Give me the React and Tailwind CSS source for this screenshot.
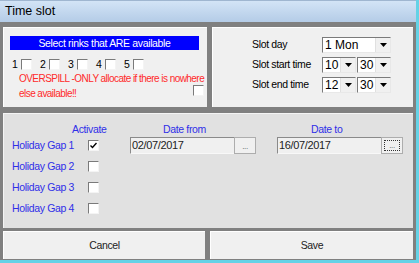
import React from 'react';

const Check = ({ checked = false }) => (
  <div className="w-[11px] h-[11px] bg-white border-t border-l border-[#7a7a7a] border-r border-b border-r-[#f4f4f4] border-b-[#f4f4f4] flex items-center justify-center shrink-0">
    {checked && (
      <svg width="7" height="7" viewBox="0 0 7 7">
        <path d="M0.5 3.5 L2.5 5.5 L6.5 1" fill="none" stroke="#000" strokeWidth="1.4" />
      </svg>
    )}
  </div>
);

const Select = ({ value, width }) => (
  <div
    className="h-[16px] bg-white border-t border-l border-[#7a7a7a] border-r border-b border-r-[#e8e8e8] border-b-[#e8e8e8] flex items-stretch"
    style={{ width }}
  >
    <span className="flex-1 pl-[2px] leading-[14px] text-[12px] tracking-normal text-black">{value}</span>
    <div className="w-[15px] bg-[#f0f0f0] border-l border-[#e0e0e0] flex items-center justify-center">
      <svg width="7" height="4" viewBox="0 0 7 4">
        <path d="M0 0 L7 0 L3.5 4 Z" fill="#000" />
      </svg>
    </div>
  </div>
);

const DateField = ({ value, focused }) => (
  <div className="flex h-[17px]">
    <div className="w-[104px] bg-[#f0f0f0] border-t border-l border-[#8a8a8a] border-b border-b-[#f8f8f8] text-[11px] leading-[15px] text-[#222] pl-[1px]">
      {value}
    </div>
    <div className="w-[22px] bg-[#f0f0f0] border border-[#adadad] flex items-center justify-center">
      <div className={`w-[16px] h-[11px] flex items-end justify-center text-[8px] leading-[8px] text-[#555] ${focused ? 'border border-dotted border-[#333]' : ''}`}>
        ...
      </div>
    </div>
  </div>
);

const App = () => {
  const gaps = ['Holiday Gap 1', 'Holiday Gap 2', 'Holiday Gap 3', 'Holiday Gap 4'];

  return (
    <div
      className="w-[419px] h-[263px] border-r-[3px] border-b-[3px] border-[#64d2e6] flex flex-col overflow-hidden text-[10.5px] tracking-[-0.35px]"
      style={{ fontFamily: '"Liberation Sans", Arial, sans-serif' }}
    >
      {/* title bar */}
      <div className="h-[22px] shrink-0 bg-gradient-to-b from-[#d3e4f6] to-[#b4cce7] border-t border-[#9fb6d0] flex items-center pl-[5px]">
        <span className="text-[12.5px] tracking-normal text-black">Time slot</span>
      </div>

      {/* body */}
      <div className="flex-1 bg-[#808080] pt-[5px] pl-[3px] pr-[3px] flex flex-col">
        <div className="flex h-[80px] gap-[5px]">
          {/* rinks */}
          <div className="w-[204px] bg-[#f0f0f0] border-t border-l border-white pt-[8px] pl-[6px] flex flex-col">
            <div className="w-[189px] h-[14px] bg-[#0000ff] text-white leading-[14px] text-center">
              Select rinks that ARE available
            </div>
            <div className="flex items-center h-[12px] mt-[8px] pl-[2px]">
              {['1', '2', '3', '4', '5'].map((n) => (
                <div key={n} className="flex items-center w-[28px]">
                  <span className="w-[9px] leading-[12px] text-black">{n}</span>
                  <Check />
                </div>
              ))}
            </div>
            <div className="flex mt-[1px]">
              <div className="w-[180px] pl-[9px] text-[10px] tracking-[-0.55px] leading-[15px] text-[#ff2a2a] whitespace-nowrap">
                OVERSPILL -ONLY allocate if there is nowhere
                <br />
                else available!!
              </div>
              <div className="self-end mb-[5px] ml-[3px]">
                <Check />
              </div>
            </div>
          </div>

          {/* slot */}
          <div className="w-[201px] bg-[#f0f0f0] border-t border-l border-white pt-[9px] flex flex-col gap-[4px]">
            <div className="flex items-center h-[16px]">
              <span className="w-[109px] pl-[39px] text-black">Slot day</span>
              <Select value="1 Mon" width={69} />
            </div>
            <div className="flex items-center h-[16px]">
              <span className="w-[109px] pl-[39px] text-black whitespace-nowrap">Slot start time</span>
              <div className="flex gap-[1px]">
                <Select value="10" width={34} />
                <Select value="30" width={34} />
              </div>
            </div>
            <div className="flex items-center h-[16px]">
              <span className="w-[109px] pl-[39px] text-black whitespace-nowrap">Slot end time</span>
              <div className="flex gap-[1px]">
                <Select value="12" width={34} />
                <Select value="30" width={34} />
              </div>
            </div>
          </div>
        </div>

        {/* holiday gaps */}
        <div className="mt-[6px] h-[115px] bg-[#e1e1e1] border-t border-l border-[#f4f4f4] pt-[9px] flex flex-col">
          <div className="flex h-[12px] pl-[68px] leading-[12px] text-[#2f2fe8]">
            <span className="w-[91px]">Activate</span>
            <span className="w-[148px]">Date from</span>
            <span>Date to</span>
          </div>
          {gaps.map((g, i) => (
            <div key={g} className="flex items-center h-[21px] pl-[8px]">
              <span className="w-[76px] text-[#2f2fe8] whitespace-nowrap">{g}</span>
              <div className="w-[42px]">
                <Check checked={i === 0} />
              </div>
              {i === 0 && (
                <div className="flex gap-[21px]">
                  <DateField value="02/07/2017" />
                  <DateField value="16/07/2017" focused />
                </div>
              )}
            </div>
          ))}
        </div>

        {/* buttons */}
        <div className="mt-[3px] flex h-[28px] gap-[5px]">
          <button className="w-[202px] bg-[#f0f0f0] border-t border-l border-white text-[#222]">
            Cancel
          </button>
          <button className="flex-1 bg-[#f0f0f0] border-t border-l border-white text-[#222]">
            Save
          </button>
        </div>
      </div>
    </div>
  );
};

export default App;
